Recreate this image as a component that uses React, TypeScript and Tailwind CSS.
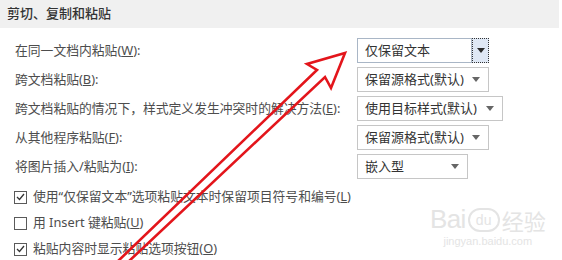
import React from 'react';

type Row = { label: React.ReactNode; value: string; width: string; focused?: boolean };

const rows: Row[] = [
  { label: <>在同一文档内粘贴(<u>W</u>):</>, value: '仅保留文本', width: 'w-[132px]', focused: true },
  { label: <>跨文档粘贴(<u>B</u>):</>, value: '保留源格式(默认)', width: 'w-[132px]' },
  { label: <>跨文档粘贴的情况下，样式定义发生冲突时的解决方法(<u>E</u>):</>, value: '使用目标样式(默认)', width: 'w-[146px]' },
  { label: <>从其他程序粘贴(<u>F</u>):</>, value: '保留源格式(默认)', width: 'w-[132px]' },
  { label: <>将图片插入/粘贴为(<u>I</u>):</>, value: '嵌入型', width: 'w-[111px]' },
];

const checks: { label: React.ReactNode; checked: boolean }[] = [
  { label: <>使用“仅保留文本”选项粘贴文本时保留项目符号和编号(<u>L</u>)</>, checked: true },
  { label: <>用 Insert 键粘贴(<u>U</u>)</>, checked: false },
  { label: <>粘贴内容时显示粘贴选项按钮(<u>O</u>)</>, checked: true },
];

const Caret = ({ dark }: { dark?: boolean }) => (
  <svg width="8" height="5" viewBox="0 0 8 5">
    <path d="M0 0h8L4 5z" fill={dark ? '#2b2b2b' : '#666'} />
  </svg>
);

const Dropdown = ({ value, width, focused }: { value: string; width: string; focused?: boolean }) => {
  if (focused) {
    return (
      <div className={`${width} h-[25px] flex`}>
        <div className="flex-1 border border-[#a9b6c6] flex items-center pl-[7px] text-[13px] text-[#333]">{value}</div>
        <div className="w-[17px] border border-dotted border-[#333] bg-[#dfe8f5] flex items-center justify-center">
          <Caret dark />
        </div>
      </div>
    );
  }
  return (
    <div className={`${width} h-[25px] border border-[#c6c6c6] flex items-center justify-between pl-[7px] pr-[8px] text-[13px] text-[#333]`}>
      <span>{value}</span>
      <Caret />
    </div>
  );
};

const CheckBox = ({ checked }: { checked: boolean }) => (
  <div className="w-[13px] h-[13px] border border-[#5a5a5a] flex items-center justify-center bg-white">
    {checked && (
      <svg width="9" height="8" viewBox="0 0 9 8">
        <path d="M1 4l2.5 2.5L8 1" stroke="#333" strokeWidth="1.3" fill="none" />
      </svg>
    )}
  </div>
);

export default function App() {
  return (
    <div className="relative w-[562px] h-[260px] bg-white overflow-hidden font-['Noto_Sans','Noto_Sans_CJK_SC',sans-serif]">
      <div className="w-[559px] h-[28px] bg-[#f0f0f0] flex items-center pl-[7px] text-[13px] font-medium text-[#333]">
        剪切、复制和粘贴
      </div>

      <div className="pt-[10px] pl-[15px] flex flex-col gap-[4px]">
        {rows.map((r, i) => (
          <div key={i} className="h-[25px] flex items-center">
            <div className="w-[342px] text-[12.8px] text-[#4d4d4d] whitespace-nowrap">{r.label}</div>
            <Dropdown value={r.value} width={r.width} focused={r.focused} />
          </div>
        ))}
      </div>

      <div className="mt-[5px] pl-[14px] flex flex-col">
        {checks.map((c, i) => (
          <div key={i} className="h-[26px] flex items-center gap-[6px]">
            <CheckBox checked={c.checked} />
            <span className="text-[12.8px] text-[#4d4d4d] whitespace-nowrap">{c.label}</span>
          </div>
        ))}
      </div>

      {/* watermark */}
      <div className="absolute left-[430px] top-[206px] flex flex-col items-center text-[#e4e4e4] select-none">
        <div className="flex items-end leading-none">
          <span className="text-[26px] font-['Liberation_Sans',sans-serif] tracking-tight">Bai</span>
          <span className="mx-[2px] w-[32px] h-[24px] rounded-full border-2 border-[#e4e4e4] text-[14px] flex items-center justify-center font-['Liberation_Sans',sans-serif]">du</span>
          <span className="text-[22px]">经验</span>
        </div>
        <span className="text-[11px] leading-none mt-[4px] font-['Liberation_Sans',sans-serif]">jingyan.baidu.com</span>
      </div>

      {/* red annotation arrow */}
      <svg className="absolute left-0 top-0" width="562" height="260" viewBox="0 0 562 260">
        <path
          d="M116 263 L317 70 L307 64 L345 53 L331 88 L325 77 L127 263"
          stroke="#e3151b"
          strokeWidth="2.6"
          fill="none"
          strokeLinejoin="miter"
        />
      </svg>
    </div>
  );
}
